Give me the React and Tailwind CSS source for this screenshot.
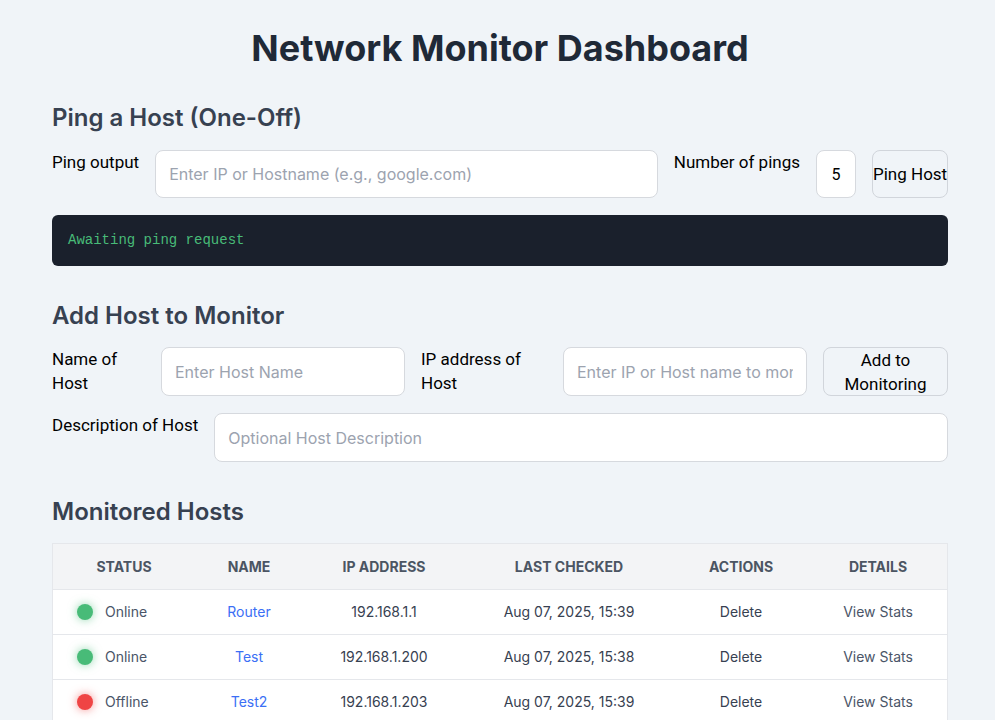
import React from "react";

const hosts = [
  { status: "Online", name: "Router", ip: "192.168.1.1", last: "Aug 07, 2025, 15:39" },
  { status: "Online", name: "Test", ip: "192.168.1.200", last: "Aug 07, 2025, 15:38" },
  { status: "Offline", name: "Test2", ip: "192.168.1.203", last: "Aug 07, 2025, 15:39" },
];

const inter = { fontFamily: "Inter, 'Noto Sans', sans-serif" };

export default function App() {
  return (
    <div className="min-h-screen bg-[#f0f4f8] px-[52px] pt-[28px] pb-10 font-['Inter',sans-serif]">
      <div className="w-[896px]">
        <h1 className="text-center text-[36px] leading-[40px] font-bold text-[#1f2937]">
          Network Monitor Dashboard
        </h1>

        <h2 className="mt-[34px] text-[24px] leading-[32px] font-semibold text-[#374151]">
          Ping a Host (One-Off)
        </h2>

        <div className="mt-[16px] flex items-start gap-4">
          <label className="font-['Roboto',sans-serif] text-[17px] leading-[24px] text-black whitespace-nowrap">
            Ping output
          </label>
          <input
            className="h-[48px] flex-1 min-w-0 rounded-[8px] border border-[#d6d9de] bg-white px-[13px] text-[16px] text-[#374151] placeholder-[#9ca3af] outline-none"
            placeholder="Enter IP or Hostname (e.g., google.com)"
          />
          <label className="font-['Roboto',sans-serif] text-[17px] leading-[24px] text-black whitespace-nowrap">
            Number of pings
          </label>
          <input
            className="h-[48px] w-[40px] rounded-[8px] border border-[#d6d9de] bg-white text-center font-['Roboto',sans-serif] text-[16px] text-black outline-none"
            defaultValue="5"
          />
          <button className="h-[48px] w-[76px] rounded-[8px] border border-[#d1d5db] bg-[#f0f4f8] font-['Roboto',sans-serif] text-[17px] leading-[24px] text-black whitespace-nowrap">
            Ping Host
          </button>
        </div>

        <div className="mt-[17px] flex h-[51px] items-center rounded-[6px] bg-[#1a202c] px-4">
          <span className="font-['Liberation_Mono',monospace] text-[14px] text-[#48bb78]">
            Awaiting ping request
          </span>
        </div>

        <h2 className="mt-[34px] text-[24px] leading-[32px] font-semibold text-[#374151]">
          Add Host to Monitor
        </h2>

        <div className="mt-[15px] flex items-start gap-4">
          <label className="w-[93px] shrink-0 font-['Roboto',sans-serif] text-[17px] leading-[24px] text-black">
            Name of Host
          </label>
          <input
            className="h-[49px] flex-1 min-w-0 rounded-[8px] border border-[#d6d9de] bg-white px-[13px] text-[16px] text-[#374151] placeholder-[#9ca3af] outline-none"
            placeholder="Enter Host Name"
          />
          <label className="w-[126px] shrink-0 font-['Roboto',sans-serif] text-[17px] leading-[24px] text-black">
            IP address of Host
          </label>
          <input
            className="h-[49px] flex-1 min-w-0 rounded-[8px] border border-[#d6d9de] bg-white px-[13px] text-[16px] text-[#374151] placeholder-[#9ca3af] outline-none"
            placeholder="Enter IP or Host name to monitor"
          />
          <button className="h-[49px] w-[125px] shrink-0 rounded-[8px] border border-[#d1d5db] bg-[#f0f4f8] font-['Roboto',sans-serif] text-[17px] leading-[24px] text-black">
            Add to
            <br />
            Monitoring
          </button>
        </div>

        <div className="mt-[17px] flex items-start gap-4">
          <label className="shrink-0 whitespace-nowrap font-['Roboto',sans-serif] text-[17px] leading-[24px] text-black">
            Description of Host
          </label>
          <input
            className="h-[49px] flex-1 min-w-0 rounded-[8px] border border-[#d6d9de] bg-white px-[13px] text-[16px] text-[#374151] placeholder-[#9ca3af] outline-none"
            placeholder="Optional Host Description"
          />
        </div>

        <h2 className="mt-[34px] text-[24px] leading-[32px] font-semibold text-[#374151]">
          Monitored Hosts
        </h2>

        <div className="mt-[15px] border border-[#e5e7eb] bg-white">
          <table className="w-full table-fixed border-collapse" style={inter}>
            <colgroup>
              <col className="w-[142px]" />
              <col className="w-[108px]" />
              <col className="w-[162px]" />
              <col className="w-[208px]" />
              <col className="w-[136px]" />
              <col />
            </colgroup>
            <thead>
              <tr className="h-[45px] bg-[#f3f4f6] text-[14px] font-bold uppercase text-[#4b5563]">
                <th className="text-center font-bold">Status</th>
                <th className="text-center font-bold">Name</th>
                <th className="text-center font-bold">IP Address</th>
                <th className="text-center font-bold">Last Checked</th>
                <th className="text-center font-bold">Actions</th>
                <th className="text-center font-bold">Details</th>
              </tr>
            </thead>
            <tbody>
              {hosts.map((h, i) => (
                <tr key={i} className="h-[45px] border-t border-[#e5e7eb] text-[14px] text-[#374151]">
                  <td className="pl-[24px]">
                    <div className="flex items-center gap-[12px]">
                      <span
                        className={
                          h.status === "Online"
                            ? "inline-block h-[16px] w-[16px] rounded-full bg-[#48bb78] shadow-[0_0_10px_rgba(72,187,120,0.6)]"
                            : "inline-block h-[16px] w-[16px] rounded-full bg-[#ef4444] shadow-[0_0_10px_rgba(239,68,68,0.6)]"
                        }
                      />
                      <span className="text-[#4a5568]">{h.status}</span>
                    </div>
                  </td>
                  <td className="text-center text-[#3b6ff5]">{h.name}</td>
                  <td className="text-center">{h.ip}</td>
                  <td className="text-center">{h.last}</td>
                  <td className="text-center">Delete</td>
                  <td className="text-center text-[#4a5568]">View Stats</td>
                </tr>
              ))}
            </tbody>
          </table>
        </div>
      </div>
    </div>
  );
}
